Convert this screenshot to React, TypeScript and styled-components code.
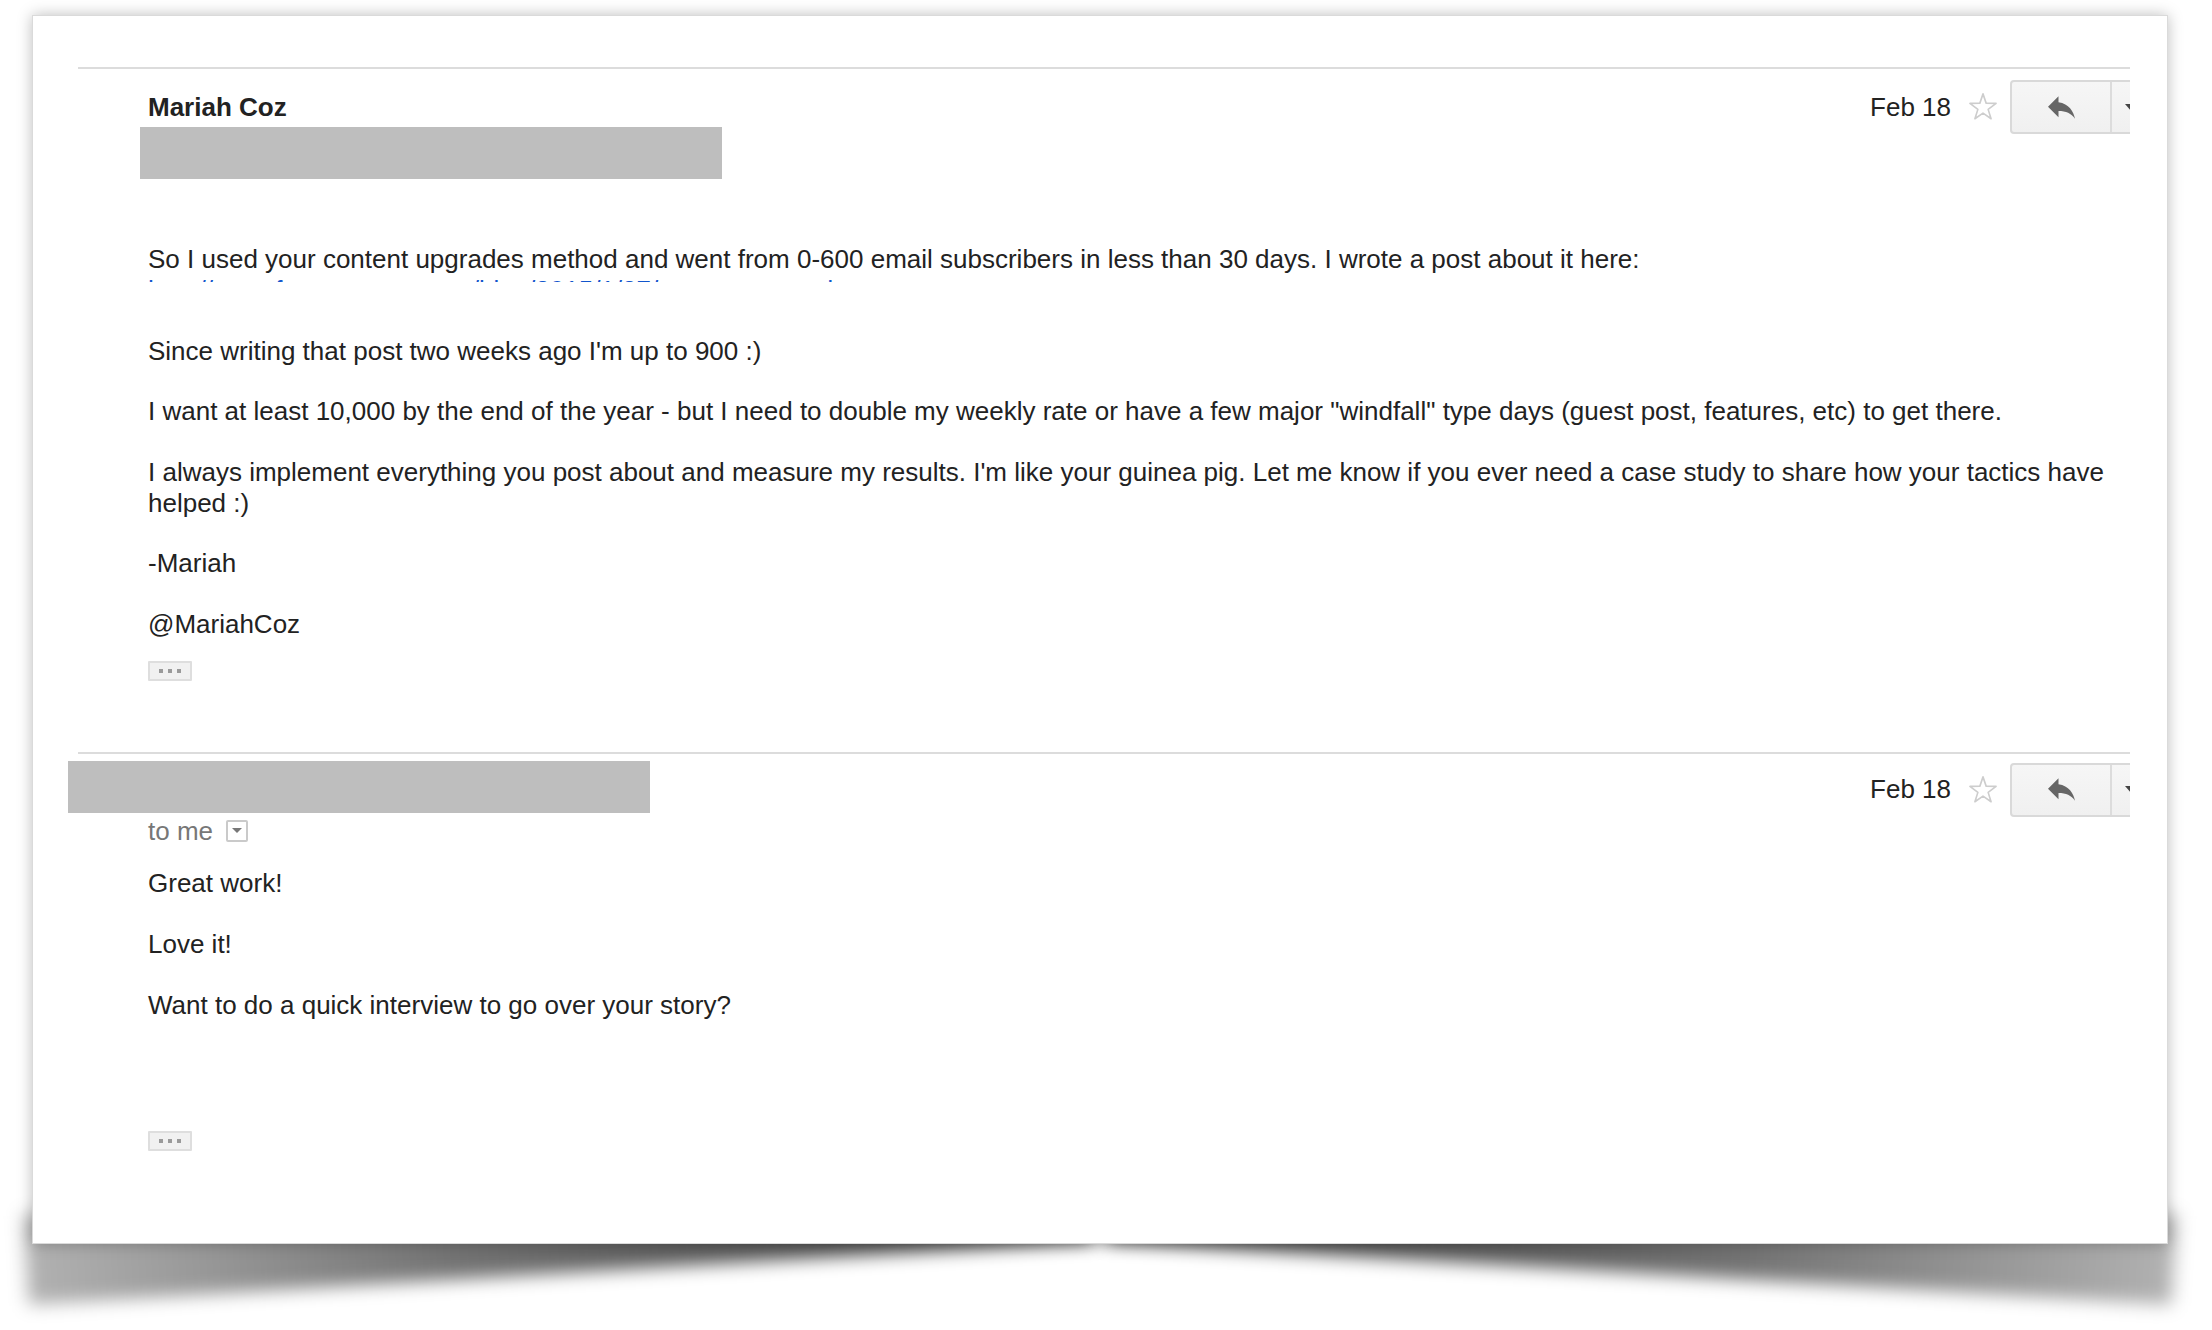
import styled, { createGlobalStyle } from "styled-components";

const GlobalStyle = createGlobalStyle`
  html, body {
    margin: 0;
    padding: 0;
    background: #fff;
  }
  body {
    font-family: "Liberation Sans", Arial, Helvetica, sans-serif;
    color: #222;
  }
`;

const Page = styled.div`
  position: relative;
  z-index: 0;
  width: 2212px;
  height: 1330px;
  box-sizing: border-box;
  padding: 15px 0 0 32px;
  background: #fff;
  overflow: hidden;
`;

// the email pane, with the curled shadow under it
const Sheet = styled.div`
  position: relative;
  width: 2136px;
  height: 1229px;
  box-sizing: border-box;
  padding: 51px 37px 0 45px;
  background: #fff;
  border: 1px solid #dadada;
  box-shadow: 0 0 14px rgba(0, 0, 0, 0.26);

  &::before,
  &::after {
    content: "";
    position: absolute;
    z-index: -1;
    bottom: -30px;
    width: 50%;
    height: 90px;
    filter: blur(9px);
  }
  &::before {
    left: -8px;
    background: linear-gradient(
      to right,
      rgba(0, 0, 0, 0.3),
      rgba(0, 0, 0, 0.55) 40%,
      rgba(0, 0, 0, 0.8)
    );
    transform: rotate(-3.4deg);
  }
  &::after {
    right: -8px;
    background: linear-gradient(
      to left,
      rgba(0, 0, 0, 0.3),
      rgba(0, 0, 0, 0.55) 40%,
      rgba(0, 0, 0, 0.8)
    );
    transform: rotate(3.4deg);
  }
`;

const Message = styled.section<{ $bottom: number }>`
  border-top: 2px solid #dcdcdc;
  padding: 0 0 ${(p) => p.$bottom}px 70px;
`;

const Header = styled.header`
  display: flex;
  justify-content: space-between;
  align-items: flex-start;
`;

const Sender = styled.div<{ $top: number }>`
  display: flex;
  flex-direction: column;
  align-items: flex-start;
  padding-top: ${(p) => p.$top}px;
  font-size: 26px;
  line-height: 30.4px;
`;

const Name = styled.span`
  font-weight: bold;
  color: #222;
`;

const Redaction = styled.div<{ $shift: number; $top: number }>`
  width: 582px;
  height: 52px;
  margin-left: -${(p) => p.$shift}px;
  margin-top: ${(p) => p.$top}px;
  background: #bebebe;
`;

const Recipient = styled.div`
  display: flex;
  align-items: center;
  gap: 13px;
  margin-top: 3px;
  color: #777;
`;

const RecipientToggle = styled.span`
  display: flex;
  align-items: center;
  justify-content: center;
  width: 18px;
  height: 18px;
  border: 2px solid #cacaca;
  border-radius: 2px;
  background: #fff;

  &::after {
    content: "";
    border-left: 5px solid transparent;
    border-right: 5px solid transparent;
    border-top: 5px solid #777;
  }
`;

const Actions = styled.div<{ $top: number }>`
  display: flex;
  align-items: center;
  margin-top: ${(p) => p.$top}px;
`;

const DateLabel = styled.span`
  font-size: 26px;
  color: #222;
  margin-right: 17px;
`;

const StarIcon = styled.svg`
  width: 30px;
  height: 32px;
  margin-right: 12px;
`;

const ReplyClip = styled.div`
  width: 120px;
  height: 54px;
  overflow: hidden;
`;

const ReplyGroup = styled.div`
  display: flex;
  width: 150px;
  height: 54px;
  box-sizing: border-box;
  border: 2px solid #d9d9d9;
  border-radius: 4px;
  background: linear-gradient(#f6f6f6, #f0f0f0);
`;

const ReplyPart = styled.div`
  display: flex;
  align-items: center;
  justify-content: center;
  width: 98px;
  border-right: 2px solid #dcdcdc;
`;

const MorePart = styled.div`
  display: flex;
  align-items: center;
  justify-content: center;
  width: 38px;

  &::after {
    content: "";
    border-left: 6px solid transparent;
    border-right: 6px solid transparent;
    border-top: 7px solid #444;
  }
`;

const Body = styled.div<{ $top: number }>`
  margin-top: ${(p) => p.$top}px;
  font-size: 26px;
  line-height: 30.4px;
  color: #222;
`;

const Para = styled.p`
  margin: 0 0 30.4px;

  &:last-child {
    margin-bottom: 0;
  }
`;

const LinkLine = styled.div`
  height: 30.4px;
`;

// the link was painted over in the screenshot, only the tops of the letters show
const LinkClip = styled.div`
  height: 7px;
  overflow: hidden;
  white-space: nowrap;
`;

const Link = styled.a`
  color: #1155cc;
  text-decoration: none;
`;

const Trimmed = styled.button<{ $top: number }>`
  display: flex;
  align-items: center;
  justify-content: center;
  gap: 5px;
  width: 44px;
  height: 20px;
  margin-top: ${(p) => p.$top}px;
  padding: 0;
  box-sizing: border-box;
  border: 2px solid #dedede;
  border-radius: 1px;
  background: #f1f1f1;
`;

const Dot = styled.span`
  width: 4px;
  height: 4px;
  background: #9a9a9a;
`;

function Star() {
  return (
    <StarIcon viewBox="0 0 24 24">
      <polygon
        points="12,1.5 14.5,8.9 22.46,9.1 16.1,13.9 18.47,21.4 12,16.9 5.53,21.4 7.9,13.9 1.54,9.1 9.5,8.9"
        fill="none"
        stroke="#cdcdcd"
        strokeWidth="1.3"
        strokeLinejoin="round"
      />
    </StarIcon>
  );
}

function ReplyButton() {
  return (
    <ReplyClip>
      <ReplyGroup>
        <ReplyPart>
          <svg width="27" height="23" viewBox="3 5 18 15">
            <path
              d="M10 9V5l-7 7 7 7v-4.1c5 0 8.5 1.6 11 5.1-1-5-4-10-11-11z"
              fill="#666"
            />
          </svg>
        </ReplyPart>
        <MorePart />
      </ReplyGroup>
    </ReplyClip>
  );
}

function MessageActions({ top }: { top: number }) {
  return (
    <Actions $top={top}>
      <DateLabel>Feb 18</DateLabel>
      <Star />
      <ReplyButton />
    </Actions>
  );
}

function TrimmedContent({ top }: { top: number }) {
  return (
    <Trimmed $top={top}>
      <Dot />
      <Dot />
      <Dot />
    </Trimmed>
  );
}

export default function App() {
  return (
    <>
      <GlobalStyle />
      <Page>
        <Sheet>
          <Message $bottom={71}>
            <Header>
              <Sender $top={23}>
                <Name>Mariah Coz</Name>
                <Redaction $shift={8} $top={5} />
              </Sender>
              <MessageActions top={11} />
            </Header>
            <Body $top={65}>
              <Para>
                So I used your content upgrades method and went from 0-600 email
                subscribers in less than 30 days. I wrote a post about it here:
                <LinkLine>
                  <LinkClip>
                    <Link href="#">
                      http://www.femtrepreneur.co/blog/2015/1/27/content-upgrades
                    </Link>
                  </LinkClip>
                </LinkLine>
              </Para>
              <Para>Since writing that post two weeks ago I'm up to 900 :)</Para>
              <Para>
                I want at least 10,000 by the end of the year - but I need to
                double my weekly rate or have a few major "windfall" type days
                (guest post, features, etc) to get there.
              </Para>
              <Para>
                I always implement everything you post about and measure my
                results. I'm like your guinea pig. Let me know if you ever need a
                case study to share how your tactics have helped :)
              </Para>
              <Para>-Mariah</Para>
              <Para>@MariahCoz</Para>
            </Body>
            <TrimmedContent top={21} />
          </Message>

          <Message $bottom={0}>
            <Header>
              <Sender $top={7}>
                <Redaction $shift={80} $top={0} />
                <Recipient>
                  to me
                  <RecipientToggle />
                </Recipient>
              </Sender>
              <MessageActions top={9} />
            </Header>
            <Body $top={22}>
              <Para>Great work!</Para>
              <Para>Love it!</Para>
              <Para>Want to do a quick interview to go over your story?</Para>
            </Body>
            <TrimmedContent top={111} />
          </Message>
        </Sheet>
      </Page>
    </>
  );
}
